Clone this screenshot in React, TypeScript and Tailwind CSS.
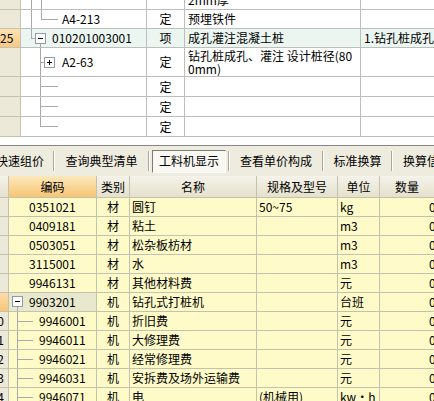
import React from "react";

const ln = "absolute bg-[#a9a9a9]";

function Box({ plus, cls }: { plus?: boolean; cls: string }) {
  return (
    <span className={`absolute w-[11px] h-[11px] border border-[#8f9ba8] bg-white ${cls}`}>
      <span className="absolute left-[2px] top-[4px] w-[5px] h-px bg-black" />
      {plus && <span className="absolute left-[4px] top-[2px] w-px h-[5px] bg-black" />}
    </span>
  );
}

function TopRow({
  h,
  hi,
  gutter,
  tree,
  code,
  pad,
  type,
  name,
  desc,
}: {
  h: string;
  hi?: boolean;
  gutter?: string;
  tree: React.ReactNode;
  code?: string;
  pad: string;
  type?: string;
  name?: React.ReactNode;
  desc?: string;
}) {
  return (
    <div className={`grid grid-cols-[21px_126px_38px_176px_1fr] ${h} ${hi ? "bg-[#ebf6f1]" : "bg-white"}`}>
      <div
        className={`border-r border-b border-[#c5c2b2] flex items-center overflow-hidden whitespace-nowrap ${
          gutter ? "bg-gradient-to-b from-[#fde2b4] to-[#f8c87f]" : "bg-[#ece9d8]"
        }`}
      >
        {gutter}
      </div>
      <div className={`relative border-r border-b border-[#bdbdbd] flex items-center ${pad}`}>
        {tree}
        {code}
      </div>
      <div className="border-r border-b border-[#bdbdbd] flex items-center justify-center">{type}</div>
      <div className="border-r border-b border-[#bdbdbd] flex items-center pl-[3px] whitespace-nowrap overflow-hidden">{name}</div>
      <div className="border-b border-[#bdbdbd] flex items-center pl-[3px] whitespace-nowrap overflow-hidden">{desc}</div>
    </div>
  );
}

const rows = [
  { code: "0351021", t: "材", name: "圆钉", spec: "50~75", unit: "kg" },
  { code: "0409181", t: "材", name: "粘土", spec: "", unit: "m3" },
  { code: "0503051", t: "材", name: "松杂板枋材", spec: "", unit: "m3" },
  { code: "3115001", t: "材", name: "水", spec: "", unit: "m3" },
  { code: "9946131", t: "材", name: "其他材料费", spec: "", unit: "元" },
  { code: "9903201", t: "机", name: "钻孔式打桩机", spec: "", unit: "台班" },
  { code: "9946001", t: "机", name: "折旧费", spec: "", unit: "元", n: "10" },
  { code: "9946011", t: "机", name: "大修理费", spec: "", unit: "元", n: "11" },
  { code: "9946021", t: "机", name: "经常修理费", spec: "", unit: "元", n: "12" },
  { code: "9946031", t: "机", name: "安拆费及场外运输费", spec: "", unit: "元", n: "13" },
  { code: "9946071", t: "机", name: "电", spec: "(机械用)", unit: "kw·h", n: "14" },
];

const cell = "border-r border-b border-[#c4c2ae] flex items-center";

export default function App() {
  return (
    <div className="w-[434px] h-[401px] overflow-hidden bg-white text-[12px] leading-none text-black font-['Noto_Sans_CJK_SC',sans-serif]">
      {/* upper list */}
      <div className="h-[145px] overflow-hidden">
        <div className="-mt-[10px]">
          <TopRow
            h="h-[20px]"
            pad="pl-[41px]"
            tree={
              <>
                <span className={`${ln} left-[10px] top-0 bottom-0 w-px`} />
                <span className={`${ln} left-[20px] top-0 bottom-0 w-px`} />
              </>
            }
            type=""
            name="2mm厚"
          />
          <TopRow
            h="h-[19px]"
            pad="pl-[41px]"
            tree={
              <>
                <span className={`${ln} left-[10px] top-0 bottom-0 w-px`} />
                <span className={`${ln} left-[20px] top-0 h-[9px] w-px`} />
                <span className={`${ln} left-[20px] top-[9px] w-[17px] h-px`} />
              </>
            }
            code="A4-213"
            type="定"
            name="预埋铁件"
          />
          <TopRow
            h="h-[19px]"
            hi
            gutter="25"
            pad="pl-[31px]"
            tree={
              <>
                <span className={`${ln} left-[10px] top-0 h-[9px] w-px`} />
                <span className={`${ln} left-[10px] top-[9px] w-[4px] h-px`} />
                <Box cls="left-[14px] top-[4px]" />
                <span className={`${ln} left-[19px] top-[15px] bottom-0 w-px`} />
              </>
            }
            code="010201003001"
            type="项"
            name="成孔灌注混凝土桩"
            desc="1.钻孔桩成孔"
          />
          <TopRow
            h="h-[29px]"
            pad="pl-[41px]"
            tree={
              <>
                <span className={`${ln} left-[19px] top-0 bottom-0 w-px`} />
                <span className={`${ln} left-[19px] top-[14px] w-[4px] h-px`} />
                <Box plus cls="left-[23px] top-[9px]" />
              </>
            }
            code="A2-63"
            type="定"
            name={
              <span className="leading-[13px]">
                钻孔桩成孔、灌注 设计桩径(80
                <br />
                0mm)
              </span>
            }
          />
          {[0, 1, 2].map((i) => (
            <TopRow
              key={i}
              h="h-[20px]"
              pad="pl-[41px]"
              tree={
                <>
                  <span className={`${ln} left-[19px] top-0 w-px ${i === 2 ? "h-[9px]" : "bottom-0"}`} />
                  <span className={`${ln} left-[19px] top-[9px] w-[18px] h-px`} />
                </>
              }
              type="定"
            />
          ))}
        </div>
      </div>

      {/* toolbar */}
      <div className="border-t border-[#878787] h-[31px] bg-[#eeecdf] flex items-center whitespace-nowrap">
        <div className="w-[53px] shrink-0 flex justify-end pr-[9px]">快速组价</div>
        <div className="h-[20px] w-0 border-l border-l-[#aca899] border-r border-r-white" />
        <div className="w-[93px] shrink-0 flex justify-center">查询典型清单</div>
        <div className="h-[20px] w-0 border-l border-l-[#aca899] border-r border-r-white" />
        <div className="w-[78px] shrink-0 flex justify-center">
          <div className="w-[74px] h-[23px] border border-t-[#7b7b7b] border-l-[#7b7b7b] border-b-white border-r-white bg-[#f9f8f2] flex items-center justify-center">
            工料机显示
          </div>
        </div>
        <div className="h-[20px] w-0 border-l border-l-[#aca899] border-r border-r-white" />
        <div className="w-[92px] shrink-0 flex justify-center">查看单价构成</div>
        <div className="h-[20px] w-0 border-l border-l-[#aca899] border-r border-r-white" />
        <div className="w-[67px] shrink-0 flex justify-center">标准换算</div>
        <div className="h-[20px] w-0 border-l border-l-[#aca899] border-r border-r-white" />
        <div className="pl-[10px]">换算信息</div>
      </div>

      {/* lower grid */}
      <div className="grid grid-cols-[9px_88px_33px_127px_81px_42px_1fr] h-[22px]">
        <div className="border-r border-b border-[#c4c2ae] bg-gradient-to-b from-[#f5f3ea] to-[#e5e1cd]" />
        <div className="border-r border-b border-[#c4c2ae] bg-gradient-to-b from-[#fde8bb] to-[#f6c574] flex items-center justify-center">编码</div>
        <div className="border-r border-b border-[#c4c2ae] bg-gradient-to-b from-[#f5f3ea] to-[#e5e1cd] flex items-center justify-center">类别</div>
        <div className="border-r border-b border-[#c4c2ae] bg-gradient-to-b from-[#f5f3ea] to-[#e5e1cd] flex items-center justify-center">名称</div>
        <div className="border-r border-b border-[#c4c2ae] bg-gradient-to-b from-[#f5f3ea] to-[#e5e1cd] flex items-center justify-center">规格及型号</div>
        <div className="border-r border-b border-[#c4c2ae] bg-gradient-to-b from-[#f5f3ea] to-[#e5e1cd] flex items-center justify-center">单位</div>
        <div className="border-b border-[#c4c2ae] bg-gradient-to-b from-[#f5f3ea] to-[#e5e1cd] flex items-center justify-center">数量</div>
      </div>
      {rows.map((r, i) => {
        const parent = i === 5;
        const child = i > 5;
        return (
          <div key={r.code} className="grid grid-cols-[9px_88px_33px_127px_81px_42px_1fr] h-[19px] bg-[#fefbc8]">
            <div
              className={`${cell} justify-end pr-[4px] overflow-hidden whitespace-nowrap ${
                parent ? "bg-gradient-to-b from-[#fddcaa] to-[#f8c57a]" : "bg-[#ece9d8]"
              }`}
            >
              {r.n}
            </div>
            <div className={`${cell} relative ${child ? "pl-[30px]" : "pl-[20px]"} ${parent ? "bg-[#e7e8cc]" : ""}`}>
              {parent && (
                <>
                  <Box cls="left-[3px] top-[3px]" />
                  <span className={`${ln} left-[8px] top-[14px] bottom-0 w-px`} />
                </>
              )}
              {child && (
                <>
                  <span className={`${ln} left-[8px] top-0 bottom-0 w-px`} />
                  <span className={`${ln} left-[8px] top-[9px] w-[16px] h-px`} />
                </>
              )}
              {r.code}
            </div>
            <div className={`${cell} justify-center`}>{r.t}</div>
            <div className={`${cell} pl-[2px] whitespace-nowrap`}>{r.name}</div>
            <div className={`${cell} pl-[2px] whitespace-nowrap`}>{r.spec}</div>
            <div className={`${cell} pl-[2px] whitespace-nowrap`}>{r.unit}</div>
            <div className="border-b border-[#c4c2ae] flex items-center pl-[49px] whitespace-nowrap overflow-hidden">0</div>
          </div>
        );
      })}
    </div>
  );
}
